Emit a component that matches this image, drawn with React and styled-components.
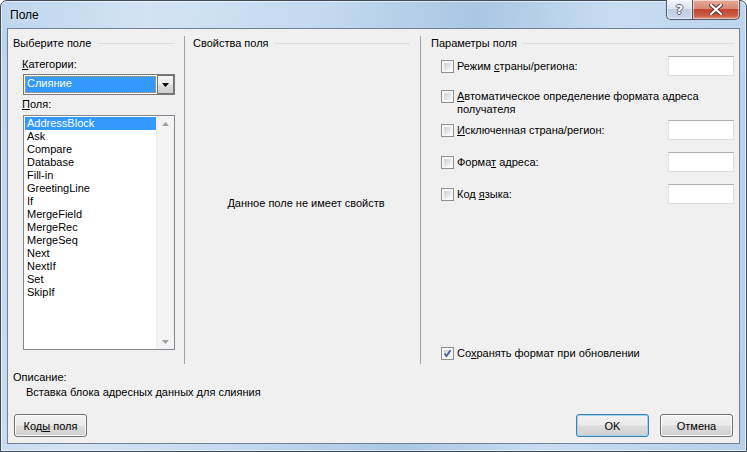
import styled, { createGlobalStyle } from "styled-components";

const GlobalStyle = createGlobalStyle`
  html, body {
    margin: 0;
    padding: 0;
    overflow: hidden;
    background: #ffffff;
  }
  body {
    font-family: "Liberation Sans", Arial, sans-serif;
    font-size: 11px;
    color: #000;
  }
`;

const Window = styled.div`
  width: 747px;
  height: 452px;
  box-sizing: border-box;
  display: flex;
  flex-direction: column;
  border: 1px solid #3d4a5a;
  border-radius: 7px 7px 0 0;
  padding: 0 6px 7px 6px;
  background: linear-gradient(
    100deg,
    #bcd4ec 0%,
    #d3e3f4 18%,
    #c2d8ef 40%,
    #aac6e3 58%,
    #c7dcf1 75%,
    #b8d0ea 100%
  );
  box-shadow: inset 0 0 0 1px rgba(255, 255, 255, 0.6);
`;

const TitleBar = styled.div`
  height: 27px;
  display: flex;
  align-items: flex-start;
  justify-content: space-between;
`;

const TitleText = styled.div`
  font-size: 12px;
  padding: 7px 0 0 3px;
  color: #000;
  text-shadow: 0 0 8px rgba(255, 255, 255, 0.9);
`;

const CaptionButtons = styled.div`
  display: flex;
  margin-top: -1px;
`;

const CaptionButton = styled.div`
  height: 20px;
  box-sizing: border-box;
  width: ${(p) => (p.$close ? "47px" : "27px")};
  border: 1px solid #4a5566;
  border-top: none;
  border-left: ${(p) => (p.$close ? "none" : "1px solid #4a5566")};
  border-radius: ${(p) => (p.$close ? "0 0 5px 0" : "0 0 0 5px")};
  display: flex;
  align-items: center;
  justify-content: center;
  background: ${(p) =>
    p.$close
      ? "linear-gradient(180deg, #e8a899 0%, #d98a78 45%, #c5452f 50%, #c95a44 80%, #e08c6e 100%)"
      : "linear-gradient(180deg, #eef3f9 0%, #dbe5f1 45%, #bfcfe2 50%, #c9d8ea 100%)"};
  box-shadow: inset 0 0 0 1px rgba(255, 255, 255, 0.55);
`;

const HelpGlyph = styled.span`
  font-family: "DejaVu Sans", sans-serif;
  font-weight: bold;
  font-size: 13px;
  color: #ffffff;
  text-shadow: 1px 0 0 #5a6170, -1px 0 0 #5a6170, 0 1px 0 #5a6170, 0 -1px 0 #5a6170;
`;

const Client = styled.div`
  flex: 1;
  background: #f0f0f0;
  border: 1px solid #6f8196;
  display: flex;
  flex-direction: column;
  padding-top: 7px;
`;

const Columns = styled.div`
  display: flex;
  height: 328px;
`;

const Column = styled.div`
  box-sizing: border-box;
  width: ${(p) => p.$width};
  flex: ${(p) => (p.$grow ? 1 : "none")};
  border-right: ${(p) => (p.$divider ? "1px solid #a0a0a0" : "none")};
  padding: 1px ${(p) => p.$pr}px 0 ${(p) => p.$pl}px;
  display: flex;
  flex-direction: column;
`;

const GroupHeader = styled.div`
  display: flex;
  align-items: center;
  height: 13px;
  line-height: 13px;
  white-space: nowrap;

  &::after {
    content: "";
    flex: 1;
    height: 1px;
    margin-left: 6px;
    background: #d5dfe5;
  }
`;

const FieldLabel = styled.div`
  line-height: 13px;
  margin: ${(p) => p.$top}px 0 0 9px;
`;

const Combo = styled.div`
  margin: 3px 0 0 10px;
  height: 21px;
  box-sizing: border-box;
  border: 1px solid #7a7a7a;
  background: #fff;
  display: flex;
  padding: 1px;
`;

const ComboValue = styled.div`
  flex: 1;
  background: #3399ff;
  color: #fff;
  line-height: 15px;
  padding-left: 2px;
  outline: 1px dotted #e89a3c;
  outline-offset: -1px;
  margin-right: 1px;
`;

const ComboButton = styled.div`
  width: 17px;
  box-sizing: border-box;
  margin: -1px -1px -1px 0;
  border: 1px solid #707070;
  background: linear-gradient(180deg, #f4f4f4 0%, #ebebeb 50%, #dcdcdc 51%, #cfcfcf 100%);
  display: flex;
  align-items: center;
  justify-content: center;
`;

const ListBox = styled.div`
  margin: 4px 0 0 10px;
  height: 235px;
  box-sizing: border-box;
  border: 1px solid #828790;
  background: #fff;
  display: flex;
  padding: 1px 0 1px 1px;
`;

const ListItems = styled.div`
  flex: 1;
`;

const ListItem = styled.div`
  height: 13px;
  line-height: 13px;
  padding-left: 2px;
  background: ${(p) => (p.$selected ? "#3399ff" : "transparent")};
  color: ${(p) => (p.$selected ? "#fff" : "#000")};
`;

const ScrollBar = styled.div`
  width: 17px;
  background: #f3f3f3;
  border-left: 1px solid #ececec;
  display: flex;
  flex-direction: column;
  justify-content: space-between;
  align-items: center;
  padding: 6px 0 5px;
  margin: -1px 0;
`;

const Message = styled.div`
  flex: 1;
  display: flex;
  align-items: center;
  justify-content: center;
  padding: 0 0 8px 9px;
`;

const OptionRow = styled.div`
  display: flex;
  align-items: ${(p) => (p.$multi ? "flex-start" : "center")};
  margin-top: ${(p) => p.$top}px;
  padding-left: 10px;
  min-height: ${(p) => (p.$multi ? "26px" : "20px")};
`;

const OptionLabel = styled.div`
  flex: 1;
  line-height: 13px;
  margin-left: 3px;
`;

const Box = styled.span`
  flex: none;
  width: 13px;
  height: 13px;
  box-sizing: border-box;
  border: 1px solid #8e8f8f;
  padding: 2px;
  background: linear-gradient(135deg, #cdd1d7 0%, #f2f3f5 100%) content-box, #f6f6f6;
  display: flex;
  align-items: center;
  justify-content: center;
  position: relative;
`;

const TextInput = styled.div`
  width: 66px;
  height: 20px;
  box-sizing: border-box;
  background: #fff;
  border: 1px solid #dbdfe6;
  border-top-color: #abadb3;
  border-left-color: #e2e3ea;
`;

const BottomOption = styled(OptionRow)`
  margin-top: auto;
  margin-bottom: 4px;
  min-height: 13px;
`;

const Description = styled.div`
  padding: 7px 0 0 5px;
  line-height: 13px;
`;

const DescriptionText = styled.div`
  padding: 2px 0 0 18px;
  line-height: 13px;
`;

const ButtonRow = styled.div`
  display: flex;
  align-items: center;
  margin-top: 15px;
  padding: 0 6px 0 6px;
  gap: 11px;
`;

const Spacer = styled.div`
  flex: 1;
`;

const Button = styled.div`
  width: 73px;
  height: 23px;
  box-sizing: border-box;
  border: 1px solid ${(p) => (p.$default ? "#3c7fb1" : "#707070")};
  border-radius: 3px;
  display: flex;
  align-items: center;
  justify-content: center;
  background: linear-gradient(180deg, #f2f2f2 0%, #ebebeb 48%, #dddddd 52%, #cfcfcf 100%);
  box-shadow: inset 0 0 0 1px ${(p) => (p.$default ? "#9ad7f5" : "#fcfcfc")};
`;

function CheckBox({ checked }) {
  return (
    <Box>
      {checked && (
        <svg width="9" height="9" viewBox="0 0 9 9" style={{ position: "absolute", left: 1, top: 1 }}>
          <path d="M1.5 4.5 L3.5 7 L7.5 1.2" fill="none" stroke="#4a5f9f" strokeWidth="1.8" />
        </svg>
      )}
    </Box>
  );
}

function Arrow({ down, color = "#a0a0a0", w = 7 }) {
  const h = Math.ceil(w / 2);
  return (
    <svg width={w} height={h} viewBox={`0 0 ${w} ${h}`}>
      <polygon
        points={down ? `0,0 ${w},0 ${w / 2},${h}` : `0,${h} ${w},${h} ${w / 2},0`}
        fill={color}
      />
    </svg>
  );
}

const fields = [
  "AddressBlock",
  "Ask",
  "Compare",
  "Database",
  "Fill-in",
  "GreetingLine",
  "If",
  "MergeField",
  "MergeRec",
  "MergeSeq",
  "Next",
  "NextIf",
  "Set",
  "SkipIf",
];

export default function App() {
  return (
    <>
      <GlobalStyle />
      <Window>
        <TitleBar>
          <TitleText>Поле</TitleText>
          <CaptionButtons>
            <CaptionButton>
              <HelpGlyph>?</HelpGlyph>
            </CaptionButton>
            <CaptionButton $close>
              <svg width="14" height="11" viewBox="0 0 14 11">
                <path
                  d="M2 1 L12 10 M12 1 L2 10"
                  stroke="#5a3028"
                  strokeWidth="4.2"
                  strokeLinecap="square"
                />
                <path
                  d="M2 1 L12 10 M12 1 L2 10"
                  stroke="#ffffff"
                  strokeWidth="2.2"
                  strokeLinecap="square"
                />
              </svg>
            </CaptionButton>
          </CaptionButtons>
        </TitleBar>

        <Client>
          <Columns>
            <Column $width="177px" $divider $pl={5} $pr={9}>
              <GroupHeader>Выберите поле</GroupHeader>
              <FieldLabel $top={8}>
                <u>К</u>атегории:
              </FieldLabel>
              <Combo>
                <ComboValue>Слияние</ComboValue>
                <ComboButton>
                  <Arrow down color="#000" w={7} />
                </ComboButton>
              </Combo>
              <FieldLabel $top={3}>
                <u>П</u>оля:
              </FieldLabel>
              <ListBox>
                <ListItems>
                  {fields.map((f, i) => (
                    <ListItem key={f} $selected={i === 0}>
                      {f}
                    </ListItem>
                  ))}
                </ListItems>
                <ScrollBar>
                  <Arrow />
                  <Arrow down />
                </ScrollBar>
              </ListBox>
            </Column>

            <Column $width="236px" $divider $pl={8} $pr={10}>
              <GroupHeader>Свойства поля</GroupHeader>
              <Message>Данное поле не имеет свойств</Message>
            </Column>

            <Column $grow $pl={10} $pr={5}>
              <GroupHeader>Параметры поля</GroupHeader>
              <OptionRow $top={6}>
                <CheckBox />
                <OptionLabel>
                  Режим <u>с</u>траны/региона:
                </OptionLabel>
                <TextInput />
              </OptionRow>
              <OptionRow $top={14} $multi>
                <CheckBox />
                <OptionLabel>
                  <u>А</u>втоматическое определение формата адреса
                  <br />
                  получателя
                </OptionLabel>
              </OptionRow>
              <OptionRow $top={4}>
                <CheckBox />
                <OptionLabel>
                  <u>И</u>сключенная страна/регион:
                </OptionLabel>
                <TextInput />
              </OptionRow>
              <OptionRow $top={12}>
                <CheckBox />
                <OptionLabel>
                  Форма<u>т</u> адреса:
                </OptionLabel>
                <TextInput />
              </OptionRow>
              <OptionRow $top={12}>
                <CheckBox />
                <OptionLabel>
                  Код <u>я</u>зыка:
                </OptionLabel>
                <TextInput />
              </OptionRow>
              <BottomOption>
                <CheckBox checked />
                <OptionLabel>
                  Со<u>х</u>ранять формат при обновлении
                </OptionLabel>
              </BottomOption>
            </Column>
          </Columns>

          <Description>Описание:</Description>
          <DescriptionText>Вставка блока адресных данных для слияния</DescriptionText>

          <ButtonRow>
            <Button>
              Код<u>ы</u>&nbsp;поля
            </Button>
            <Spacer />
            <Button $default>OK</Button>
            <Button>Отмена</Button>
          </ButtonRow>
        </Client>
      </Window>
    </>
  );
}
